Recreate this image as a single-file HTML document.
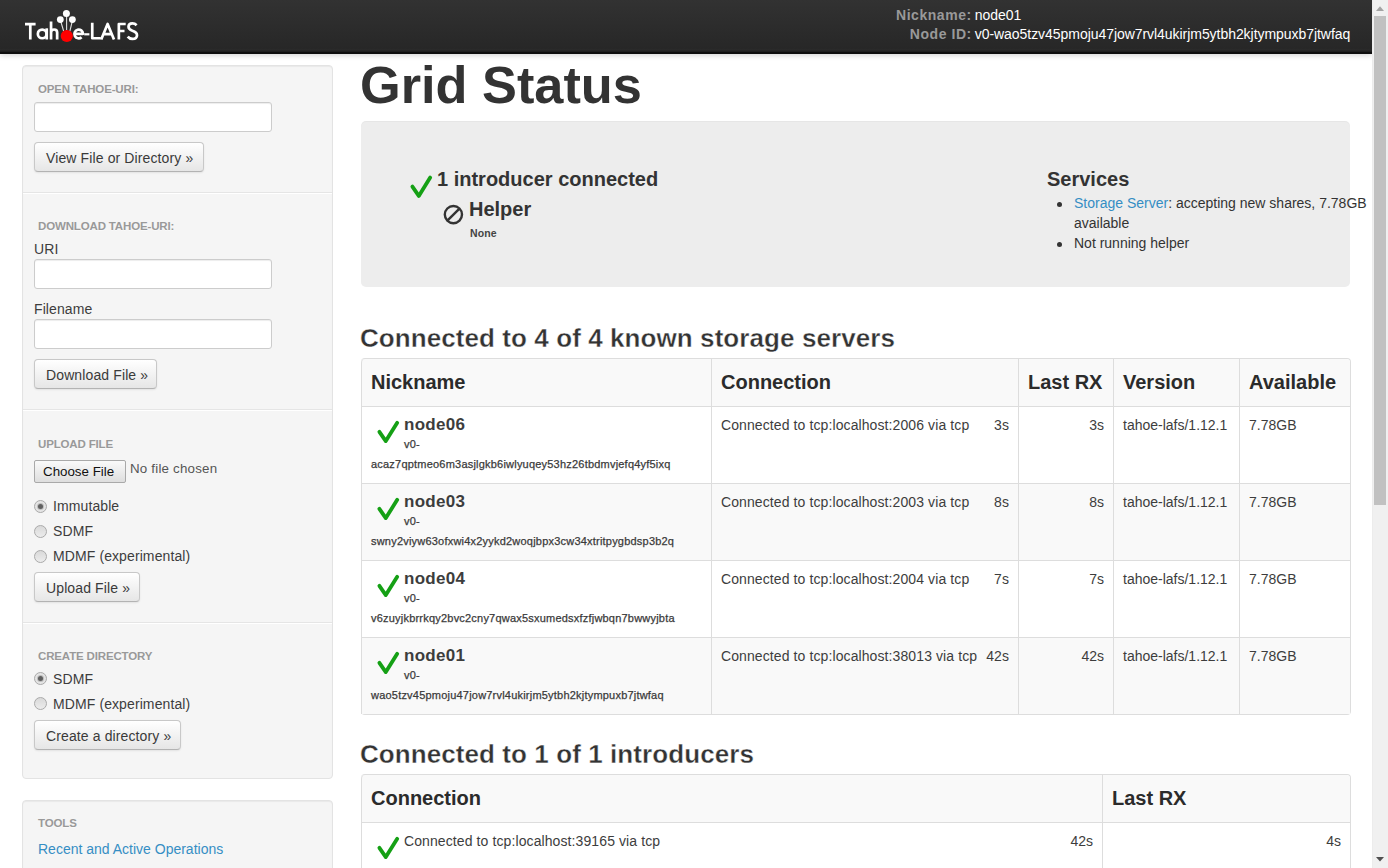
<!DOCTYPE html>
<html><head><meta charset="utf-8"><title>Tahoe-LAFS - Welcome</title>
<style>
*{box-sizing:border-box}
html,body{margin:0;padding:0;width:1388px;height:868px;overflow:hidden;background:#fff}
body{font-family:"Liberation Sans",sans-serif;font-size:14px;line-height:20px;color:#333;position:relative}
.abs{position:absolute}
#nav{left:0;top:0;width:1372px;height:54px;background:linear-gradient(#323232,#272727 49px,#2c2c2c 50px,#1e1e1e 51px);border-bottom:2px solid #0e0e0e;box-shadow:0 1px 6px rgba(0,0,0,.2)}
#sb{left:1372px;top:0;width:16px;height:868px;background:#f0f0f0;border-left:1px solid #ececec}
#thumb{left:1374px;top:16px;width:12px;height:489px;background:#c1c1c1}
.well{background:#f5f5f5;border:1px solid #e3e3e3;border-radius:4px;box-shadow:inset 0 1px 1px rgba(0,0,0,.05)}
.hdr{font-size:11.5px;letter-spacing:-.15px;font-weight:bold;color:#999;text-transform:uppercase;line-height:20px;text-shadow:0 1px 0 rgba(255,255,255,.5);white-space:nowrap}
.inp{background:#fff;border:1px solid #ccc;border-radius:3px;box-shadow:inset 0 1px 1px rgba(0,0,0,.075);height:30px;width:238px}
.btn{border:1px solid #c8c8c8;border-bottom-color:#b3b3b3;border-radius:4px;background:linear-gradient(#fff,#e6e6e6);box-shadow:inset 0 1px 0 rgba(255,255,255,.2),0 1px 2px rgba(0,0,0,.08);height:30px;padding:.5px 11px 0;line-height:28px;color:#3a3a3a;font-size:14px;white-space:nowrap;letter-spacing:.12px}
.lbl{font-size:14px;color:#3d3d3d;line-height:20px;white-space:nowrap;letter-spacing:.1px}
.radio{width:13px;height:13px;border-radius:50%;border:1.5px solid #aaa;background:linear-gradient(#d9d9d9,#ececec)}
.radio.on{background:#e4e4e4}.radio.on::after{content:"";position:absolute;left:2.5px;top:2.5px;width:5px;height:5px;border-radius:50%;background:#606060;box-shadow:0 0 0 1px #bdbdbd}
a{color:#358ec4;text-decoration:none}
h1{margin:0;font-size:52px;font-weight:bold;line-height:56px;color:#333;white-space:nowrap}
h2{margin:0;font-size:26px;letter-spacing:.08px;font-weight:bold;line-height:32px;-webkit-text-stroke:.35px #fff;color:#333;white-space:nowrap}
.sep{left:23px;width:309px;height:2px;border-top:1px solid #e5e5e5;border-bottom:1px solid #fff}
table.t{position:absolute;border-collapse:separate;border-spacing:0;border:1px solid #ddd;border-left:0;border-radius:4px;table-layout:fixed}
table.t th,table.t td{border-left:1px solid #ddd;border-top:1px solid #ddd;padding:8px 9px;vertical-align:top;text-align:left}
table.t thead th{border-top:0;background:#f9f9f9;color:#2b2b2b;font-size:20px;font-weight:bold;height:47px;line-height:31px;padding-top:8px;padding-bottom:8px}
table.t tr:first-child th:first-child{border-top-left-radius:4px}
table.t tr:first-child th:last-child{border-top-right-radius:4px}
table.t td{height:77px;color:#3d3d3d}table.t td.c2{letter-spacing:.1px}
table.t tbody tr:nth-child(even) td{background:#f9f9f9}
.chk{float:left;width:33px;height:30px;position:relative}
.chk svg{position:absolute;left:0;top:0}
.nick{font-size:17px;font-weight:bold;line-height:19px;letter-spacing:.3px}
.nid{font-size:11px;line-height:20px;color:#3a3a3a;letter-spacing:.21px;-webkit-text-stroke:.25px #3a3a3a}
.rt{float:right}
.nodeinfo th{color:#999;font-weight:bold;text-align:right;padding:0 3px 0 0;letter-spacing:.55px}
.nodeinfo td{color:#fff;padding:0;letter-spacing:-.05px}
</style></head><body>
<div id="nav" class="abs"></div>
<svg class="abs" style="left:0;top:0" width="150" height="54" viewBox="0 0 150 54">
 <g fill="none" stroke="#fff" stroke-width="2.7" stroke-linejoin="round">
  <path d="M25 24.2H35.6M30.3 24.2V39.5"/>
  <circle cx="42.2" cy="33.9" r="4.35"/><path d="M46.75 28.3V39.5"/>
  <path d="M51.05 21.6V39.5M51.05 39.5V32.5Q51.05 29.5 54.1 29.5Q57.15 29.5 57.15 32.5V39.5"/>
  <path d="M75.4 33.8H83A4.3 4.4 0 1 0 81.6 37.2"/>
  <path d="M84.2 34.3H89.4" stroke-width="2.2"/>
  <path d="M92.25 22.7V38.25H100.8"/>
  <path d="M101.2 39.5L107.6 24L114 39.5M103.8 34.2H111.4"/>
  <path d="M118.85 39.5V24H125.7M118.85 31H124.5"/>
  <path d="M136.6 25.2Q134.9 23.4 132.4 23.4Q128.5 23.4 128.5 26.8Q128.5 29.4 132.4 30.8Q137 32.3 137 35.2Q137 38.9 132.5 38.9Q129.5 38.9 127.7 36.6"/>
  <path d="M63.6 31L60.8 21.5M66.6 30V15.5M69.9 31L72.2 21.5" stroke-width="1.1" stroke-opacity=".85"/>
 </g>
 <g fill="#fff"><circle cx="66.4" cy="13.4" r="3.5"/><circle cx="60.3" cy="19.6" r="3.4"/><circle cx="72.4" cy="19.6" r="3.4"/></g>
 <circle cx="66.8" cy="36" r="6.1" fill="#f00"/>
</svg>
<table class="abs nodeinfo" style="left:896px;top:6px;border-collapse:collapse;font-size:14px;line-height:19px">
<tr><th>Nickname:</th><td>node01</td></tr>
<tr><th>Node ID:</th><td>v0-wao5tzv45pmoju47jow7rvl4ukirjm5ytbh2kjtympuxb7jtwfaq</td></tr>
</table>
<div id="sb" class="abs"></div>
<div id="thumb" class="abs"></div>
<svg class="abs" style="left:1371px;top:0" width="17" height="868">
 <path d="M5 11L9 6.3L13 11Z" fill="#a3a3a3"/>
 <path d="M5 857L13 857L9 861.5Z" fill="#505050"/>
</svg>

<!-- sidebar -->
<div class="abs well" style="left:22px;top:65px;width:311px;height:714px"></div>
<div class="abs hdr" style="left:38px;top:79px">Open Tahoe-URI:</div>
<div class="abs inp" style="left:34px;top:102px"></div>
<div class="abs btn" style="left:34px;top:142px;width:170px">View File or Directory &raquo;</div>
<div class="abs sep" style="top:192px"></div>

<div class="abs hdr" style="left:38px;top:216px">Download Tahoe-URI:</div>
<div class="abs lbl" style="left:34px;top:239px">URI</div>
<div class="abs inp" style="left:34px;top:259px"></div>
<div class="abs lbl" style="left:34px;top:299px">Filename</div>
<div class="abs inp" style="left:34px;top:319px"></div>
<div class="abs btn" style="left:34px;top:359px;width:123px">Download File &raquo;</div>
<div class="abs sep" style="top:409px"></div>

<div class="abs hdr" style="left:38px;top:434px">Upload File</div>
<div class="abs" style="left:34px;top:460px;width:92px;height:23px;border:1px solid #a9a9a9;border-radius:2px;background:linear-gradient(#fafafa,#dedede);font-size:13.33px;line-height:21px;padding-left:8px;color:#111;white-space:nowrap">Choose File</div>
<div class="abs lbl" style="left:130px;top:459px;font-size:13.33px;color:#555;letter-spacing:.2px">No file chosen</div>
<div class="abs radio on" style="left:34px;top:500px"></div><div class="abs lbl" style="left:53px;top:496px">Immutable</div>
<div class="abs radio" style="left:34px;top:525px"></div><div class="abs lbl" style="left:53px;top:521px">SDMF</div>
<div class="abs radio" style="left:34px;top:550px"></div><div class="abs lbl" style="left:53px;top:546px">MDMF (experimental)</div>
<div class="abs btn" style="left:34px;top:572px;width:106px">Upload File &raquo;</div>
<div class="abs sep" style="top:622px"></div>

<div class="abs hdr" style="left:38px;top:646px">Create Directory</div>
<div class="abs radio on" style="left:34px;top:672px"></div><div class="abs lbl" style="left:53px;top:669px">SDMF</div>
<div class="abs radio" style="left:34px;top:697px"></div><div class="abs lbl" style="left:53px;top:694px">MDMF (experimental)</div>
<div class="abs btn" style="left:34px;top:720px;width:147px">Create a directory &raquo;</div>

<div class="abs well" style="left:22px;top:800px;width:311px;height:100px"></div>
<div class="abs hdr" style="left:38px;top:813px">Tools</div>
<a class="abs" style="left:38px;top:839px;white-space:nowrap">Recent and Active Operations</a>

<!-- content -->
<h1 class="abs" style="left:360px;top:56.5px;font-size:52.3px">Grid Status</h1>
<div class="abs" style="left:361px;top:121px;width:989px;height:165.5px;background:#ededed;border-radius:5px;box-shadow:inset 0 1px 1px rgba(0,0,0,.03)"></div>
<svg class="abs" style="left:401.5px;top:170px" width="32" height="32"><path d="M10.4 16.6L16.8 25.9L28.2 7.6" fill="none" stroke="#15a015" stroke-width="3.8" stroke-linecap="round" stroke-linejoin="round"/></svg>
<div class="abs" style="left:437px;top:167px;font-size:20px;font-weight:bold;line-height:24px;white-space:nowrap">1 introducer connected</div>
<svg class="abs" style="left:441px;top:202px" width="25" height="25"><circle cx="12.4" cy="12.6" r="8.6" fill="none" stroke="#333" stroke-width="2.4"/><path d="M18.2 6.8L6.6 18.4" stroke="#333" stroke-width="2.4"/></svg>
<div class="abs" style="left:469px;top:196.5px;font-size:20px;font-weight:bold;line-height:24px">Helper</div>
<div class="abs" style="left:470px;top:223.5px;font-size:10.5px;font-weight:bold;line-height:18px;letter-spacing:.1px;color:#444">None</div>
<div class="abs" style="left:1047px;top:167px;font-size:20px;font-weight:bold;line-height:24px">Services</div>
<div class="abs" style="left:1074px;top:193px;width:300px;line-height:20px">
 <div style="position:relative"><span class="abs" style="left:-17px;top:8.5px;width:5px;height:5px;border-radius:50%;background:#333"></span><a>Storage Server</a>: accepting new shares, 7.78GB available</div>
 <div style="position:relative"><span class="abs" style="left:-17px;top:8.5px;width:5px;height:5px;border-radius:50%;background:#333"></span>Not running helper</div>
</div>

<h2 class="abs" style="left:360px;top:322px">Connected to 4 of 4 known storage servers</h2>
<table class="t" style="left:361px;top:358px;width:989px">
<colgroup><col style="width:350px"><col style="width:307px"><col style="width:95px"><col style="width:126px"><col style="width:111px"></colgroup>
<thead><tr><th>Nickname</th><th>Connection</th><th>Last RX</th><th>Version</th><th>Available</th></tr></thead>
<tbody>
<tr><td><div class="chk"><svg width="32" height="32"><path d="M8.4 16.8L14.8 26.1L26.2 7.8" fill="none" stroke="#15a015" stroke-width="3.8" stroke-linecap="round" stroke-linejoin="round"/></svg></div><div class="nick">node06</div><div class="nid">v0-acaz7qptmeo6m3asjlgkb6iwlyuqey53hz26tbdmvjefq4yf5ixq</div></td><td class="c2">Connected to tcp:localhost:2006 via tcp<span class="rt">3s</span></td><td style="text-align:right">3s</td><td>tahoe-lafs/1.12.1</td><td>7.78GB</td></tr>
<tr><td><div class="chk"><svg width="32" height="32"><path d="M8.4 16.8L14.8 26.1L26.2 7.8" fill="none" stroke="#15a015" stroke-width="3.8" stroke-linecap="round" stroke-linejoin="round"/></svg></div><div class="nick">node03</div><div class="nid">v0-swny2viyw63ofxwi4x2yykd2woqjbpx3cw34xtritpygbdsp3b2q</div></td><td class="c2">Connected to tcp:localhost:2003 via tcp<span class="rt">8s</span></td><td style="text-align:right">8s</td><td>tahoe-lafs/1.12.1</td><td>7.78GB</td></tr>
<tr><td><div class="chk"><svg width="32" height="32"><path d="M8.4 16.8L14.8 26.1L26.2 7.8" fill="none" stroke="#15a015" stroke-width="3.8" stroke-linecap="round" stroke-linejoin="round"/></svg></div><div class="nick">node04</div><div class="nid">v0-v6zuyjkbrrkqy2bvc2cny7qwax5sxumedsxfzfjwbqn7bwwyjbta</div></td><td class="c2">Connected to tcp:localhost:2004 via tcp<span class="rt">7s</span></td><td style="text-align:right">7s</td><td>tahoe-lafs/1.12.1</td><td>7.78GB</td></tr>
<tr><td><div class="chk"><svg width="32" height="32"><path d="M8.4 16.8L14.8 26.1L26.2 7.8" fill="none" stroke="#15a015" stroke-width="3.8" stroke-linecap="round" stroke-linejoin="round"/></svg></div><div class="nick">node01</div><div class="nid">v0-wao5tzv45pmoju47jow7rvl4ukirjm5ytbh2kjtympuxb7jtwfaq</div></td><td class="c2">Connected to tcp:localhost:38013 via tcp<span class="rt">42s</span></td><td style="text-align:right">42s</td><td>tahoe-lafs/1.12.1</td><td>7.78GB</td></tr>
</tbody></table>

<h2 class="abs" style="left:360px;top:738px">Connected to 1 of 1 introducers</h2>
<table class="t" style="left:361px;top:774px;width:989px">
<colgroup><col style="width:741px"><col style="width:248px"></colgroup>
<thead><tr><th>Connection</th><th>Last RX</th></tr></thead>
<tbody>
<tr><td><div class="chk"><svg width="32" height="32"><path d="M8.4 16.8L14.8 26.1L26.2 7.8" fill="none" stroke="#15a015" stroke-width="3.8" stroke-linecap="round" stroke-linejoin="round"/></svg></div><span style="letter-spacing:.1px">Connected to tcp:localhost:39165 via tcp</span><span class="rt">42s</span></td><td style="text-align:right">4s</td></tr>
</tbody></table>
</body></html>
